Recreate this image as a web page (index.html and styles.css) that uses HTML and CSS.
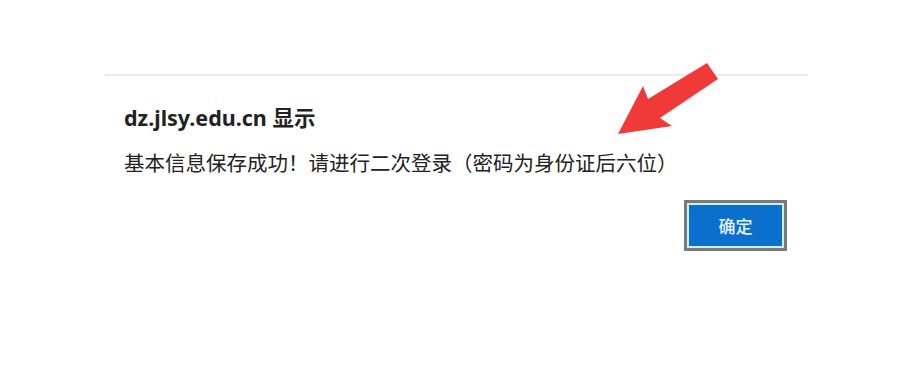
FILE: index.html
```html
<!DOCTYPE html>
<html lang="zh-CN">
<head>
    <meta charset="UTF-8">
    <title>dz.jlsy.edu.cn 显示</title>
    <link rel="stylesheet" href="styles.css">
</head>
<body>
    <div class="dialog">
        <h1 class="dialog-title">dz.jlsy.edu.cn 显示</h1>
        <p class="dialog-message">基本信息保存成功！请进行二次登录（密码为身份证后六位）</p>
        <div class="dialog-actions">
            <button class="ok-button" type="button">确定</button>
        </div>

        <!-- red annotation arrow -->
        <svg class="arrow" width="120" height="90" viewBox="600 55 120 90">
            <polygon points="707,62 718,78 660,117 672,125 618,133 643,85 648,98" fill="#f03a3a"/>
        </svg>
    </div>
</body>
</html>
```

FILE: styles.css
```css
body {
    margin: 0;
    padding-top: 74px;
    background-color: #ffffff;
    font-family: "Noto Sans", "Noto Sans CJK SC", sans-serif;
    color: #222;
}

.dialog {
    position: relative;
    width: 703px;
    margin-left: 105px;
    border-top: 2px solid #ececec;
    padding: 0 19px;
    box-sizing: border-box;
}

.dialog-title {
    margin: 0;
    padding-top: 29px;
    font-size: 21.5px;
    font-weight: bold;
    line-height: 26px;
}

.dialog-message {
    margin: 18px 0 0 0;
    font-size: 20.5px;
    line-height: 28px;
}

.dialog-actions {
    display: flex;
    justify-content: flex-end;
    margin-top: 23px;
    padding-right: 2px;
}

.ok-button {
    width: 103px;
    height: 51px;
    background-color: #0b6fcd;
    color: #e8f3ff;
    border: 3px solid #7a7a7a;
    box-shadow: inset 0 0 0 2px #cfeeff;
    font-family: "Noto Sans CJK SC", sans-serif;
    font-size: 17px;
    font-weight: 500;
    cursor: pointer;
}

.arrow {
    position: absolute;
    left: 495px;
    top: -20px;
}
```
